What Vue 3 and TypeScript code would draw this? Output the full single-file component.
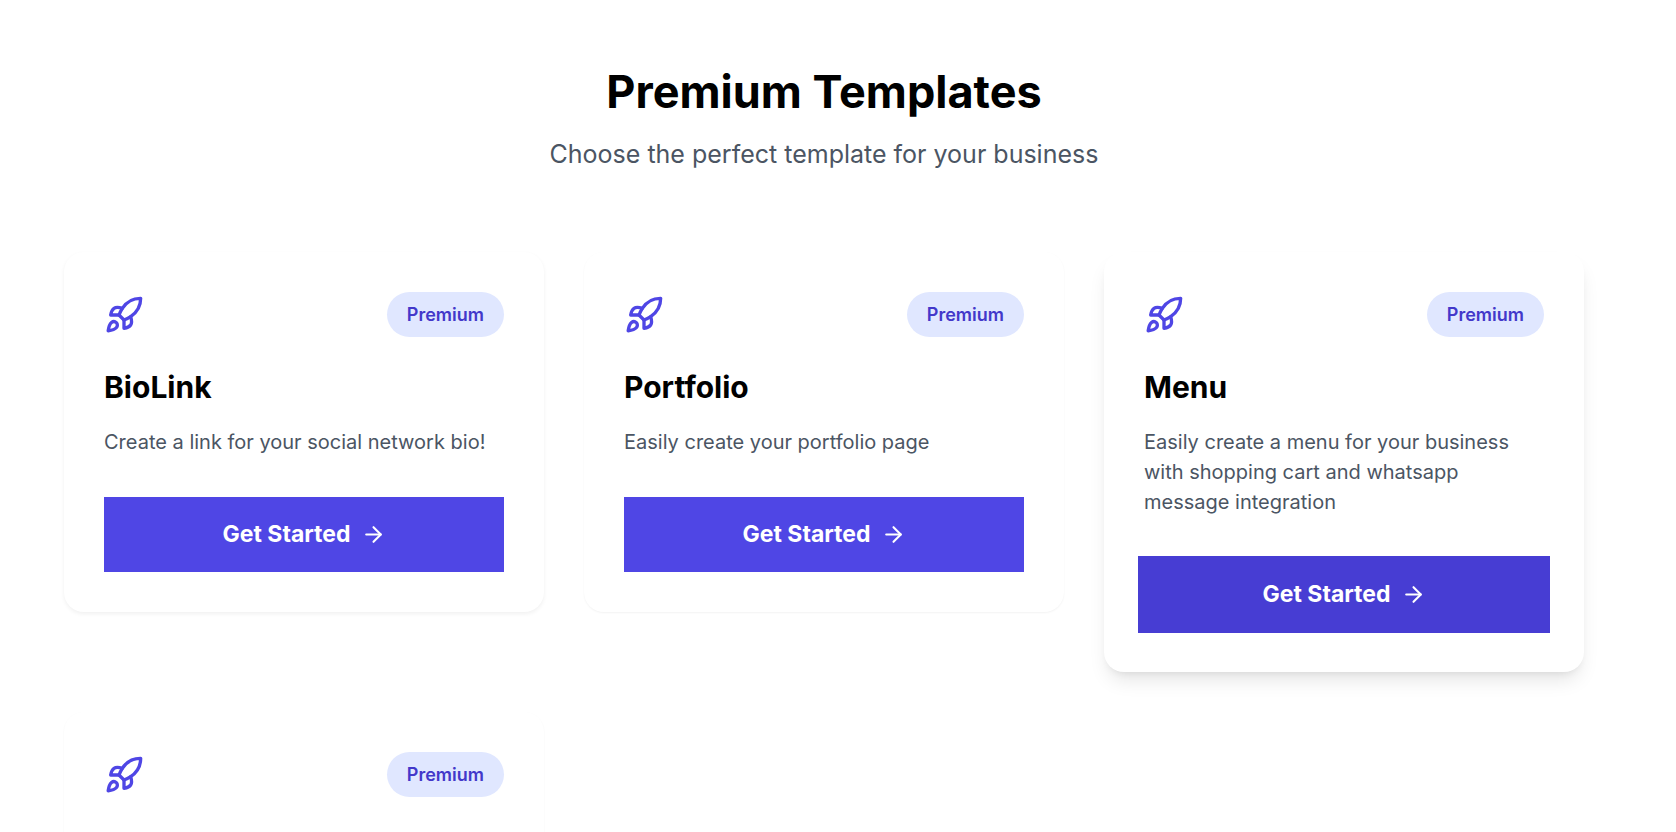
<script setup lang="ts">
interface Template {
  id: number
  name?: string
  description?: string
  raised?: boolean
  active?: boolean
}

const templates: Template[] = [
  { id: 1, name: 'BioLink', description: 'Create a link for your social network bio!', raised: true },
  { id: 2, name: 'Portfolio', description: 'Easily create your portfolio page' },
  {
    id: 3,
    name: 'Menu',
    description: 'Easily create a menu for your business with shopping cart and whatsapp message integration',
    active: true,
  },
  { id: 4 },
]
</script>

<template>
  <main class="page">
    <div class="container">
      <header class="intro">
        <h1>Premium Templates</h1>
        <p>Choose the perfect template for your business</p>
      </header>

      <section class="grid">
        <article
          v-for="item in templates"
          :key="item.id"
          class="card"
          :class="{ 'card-raised': item.raised, 'card-active': item.active }"
        >
          <div class="card-top">
            <svg class="rocket" viewBox="0 0 24 24" aria-hidden="true">
              <path d="M4.5 16.5c-1.5 1.26-2 5-2 5s3.74-.5 5-2c.71-.84.7-2.13-.09-2.91a2.18 2.18 0 0 0-2.91-.09z" />
              <path d="m12 15-3-3a22 22 0 0 1 2-3.95A12.88 12.88 0 0 1 22 2c0 2.72-.78 7.5-6 11a22.35 22.35 0 0 1-4 2z" />
              <path d="M9 12H4s.55-3.03 2-4c1.62-1.08 5 0 5 0" />
              <path d="M12 15v5s3.03-.55 4-2c1.08-1.62 0-5 0-5" />
            </svg>
            <span class="badge">Premium</span>
          </div>
          <template v-if="item.name">
            <h2>{{ item.name }}</h2>
            <p class="description">{{ item.description }}</p>
            <button type="button" class="start">
              <span>Get Started</span>
              <svg class="arrow" viewBox="0 0 24 24" aria-hidden="true">
                <path d="M5 12h14" />
                <path d="m12 5 7 7-7 7" />
              </svg>
            </button>
          </template>
        </article>
      </section>
    </div>
  </main>
</template>

<style>
body {
  margin: 0;
  background: #fff;
}
</style>

<style scoped>
.page {
  box-sizing: border-box;
  height: 100vh;
  overflow: hidden;
  padding: 67px 28px 0 0;
  font-family: Inter, "Liberation Sans", sans-serif;
  color: #000;
}

.container {
  box-sizing: border-box;
  max-width: 1600px;
  margin: 0 auto;
  padding: 0 40px;
}

.intro {
  margin-bottom: 80px;
  text-align: center;
}

h1,
h2,
p {
  margin: 0;
}

h1 {
  margin-bottom: 20px;
  font-size: 45px;
  font-weight: 700;
  line-height: 50px;
}

.intro p {
  color: #4b5563;
  font-size: 25px;
  line-height: 35px;
}

.grid {
  display: grid;
  grid-template-columns: repeat(3, minmax(0, 1fr));
  align-items: start;
  gap: 40px;
}

.card {
  box-sizing: border-box;
  min-height: 360px;
  padding: 40px;
  border-radius: 20px;
  background: #fff;
  box-shadow: 0 1px 2px rgba(0, 0, 0, 0.05);
}

.card-raised {
  box-shadow: 0 2px 4px rgba(0, 0, 0, 0.06);
}

.card-active {
  box-shadow: 0 12px 19px -4px rgba(0, 0, 0, 0.1), 0 5px 8px -5px rgba(0, 0, 0, 0.1);
}

.card-top {
  display: flex;
  align-items: center;
  justify-content: space-between;
  margin-bottom: 30px;
}

.rocket,
.arrow {
  fill: none;
  stroke: currentColor;
  stroke-width: 2;
  stroke-linecap: round;
  stroke-linejoin: round;
}

.rocket {
  width: 40px;
  height: 40px;
  color: #4f46e5;
}

.badge {
  padding: 10px 20px;
  border-radius: 999px;
  background: #e0e7ff;
  color: #4338ca;
  font-size: 18px;
  font-weight: 600;
  line-height: 25px;
}

h2 {
  margin-bottom: 20px;
  font-size: 30px;
  font-weight: 700;
  line-height: 40px;
}

.description {
  margin-bottom: 40px;
  color: #4b5563;
  font-size: 20px;
  line-height: 30px;
}

.start {
  display: flex;
  align-items: center;
  justify-content: center;
  gap: 10px;
  width: 100%;
  height: 75px;
  padding: 0;
  border: 0;
  background: #4f46e5;
  color: #fff;
  font-family: inherit;
  font-size: 23px;
  font-weight: 700;
  line-height: 35px;
  cursor: pointer;
}

.arrow {
  width: 25px;
  height: 25px;
}

.card-active .start {
  width: calc(100% + 12px);
  height: 77px;
  margin: -1px -6px;
  background: #473dd3;
}
</style>
